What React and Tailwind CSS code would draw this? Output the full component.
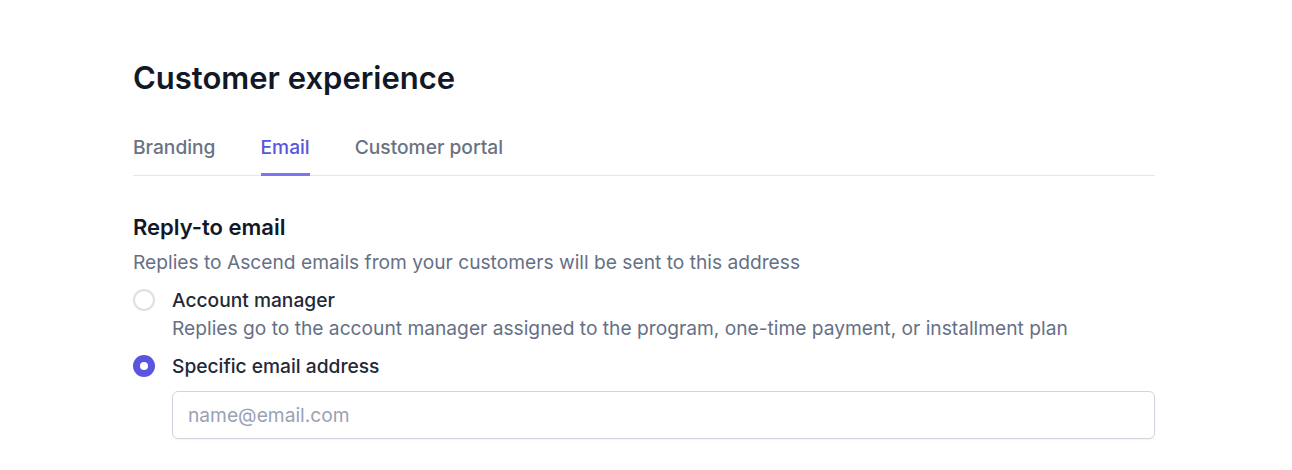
import { useState } from "react";

const tabs = ["Branding", "Email", "Customer portal"];

function Radio({ checked }) {
  return checked ? (
    <span className="flex h-[22px] w-[22px] shrink-0 items-center justify-center rounded-full bg-[#5b54e0]">
      <span className="block h-2 w-2 rounded-full bg-white" />
    </span>
  ) : (
    <span className="block h-[22px] w-[22px] shrink-0 rounded-full border-2 border-[#dcdfe4] bg-white" />
  );
}

export default function App() {
  const [activeTab, setActiveTab] = useState("Email");
  const [choice, setChoice] = useState("specific");

  return (
    <div className="min-h-screen bg-white font-['Inter',sans-serif] text-[#111827]">
      <div className="ml-[133px] w-[1022px] pt-[58px]">
        <h1 className="text-[31px] font-semibold leading-10 text-[#111827]">Customer experience</h1>

        <div className="mt-[37px] flex gap-[45px] border-b border-[#e5e7eb]">
          {tabs.map((tab) => {
            const active = tab === activeTab;
            return (
              <button
                key={tab}
                type="button"
                onClick={() => setActiveTab(tab)}
                className={`-mb-px border-b-[3px] pb-[14px] text-[19.2px] font-medium leading-6 ${
                  active ? "border-[#7b77ea] text-[#5b54e0]" : "border-transparent text-[#6b7280]"
                }`}
              >
                {tab}
              </button>
            );
          })}
        </div>

        <h2 className="mt-[37px] text-[22px] font-semibold leading-7 text-[#111827]">Reply-to email</h2>
        <p className="mt-[7px] text-[19.2px] leading-7 text-[#667085]">
          Replies to Ascend emails from your customers will be sent to this address
        </p>

        <div className="mt-[10px] flex flex-col gap-[10px]">
          <label className="flex cursor-pointer items-start gap-[17px]" onClick={() => setChoice("manager")}>
            <span className="mt-[3px]">
              <Radio checked={choice === "manager"} />
            </span>
            <span>
              <span className="block text-[19.2px] font-medium leading-7 text-[#1f2937]">Account manager</span>
              <span className="block text-[19.2px] leading-7 text-[#667085]">
                Replies go to the account manager assigned to the program, one-time payment, or installment plan
              </span>
            </span>
          </label>

          <label className="flex cursor-pointer items-start gap-[17px]" onClick={() => setChoice("specific")}>
            <span className="mt-[3px]">
              <Radio checked={choice === "specific"} />
            </span>
            <span className="block text-[19.2px] font-medium leading-7 text-[#1f2937]">Specific email address</span>
          </label>
        </div>

        <div className="ml-[39px] mt-[11px]">
          <input
            type="email"
            placeholder="name@email.com"
            className="h-[48px] w-full rounded-md border border-[#d0d5dd] px-[15px] text-[19.2px] text-[#111827] shadow-[0_1px_2px_rgba(16,24,40,0.05)] outline-none placeholder:text-[#98a2b3]"
          />
        </div>
      </div>
    </div>
  );
}
